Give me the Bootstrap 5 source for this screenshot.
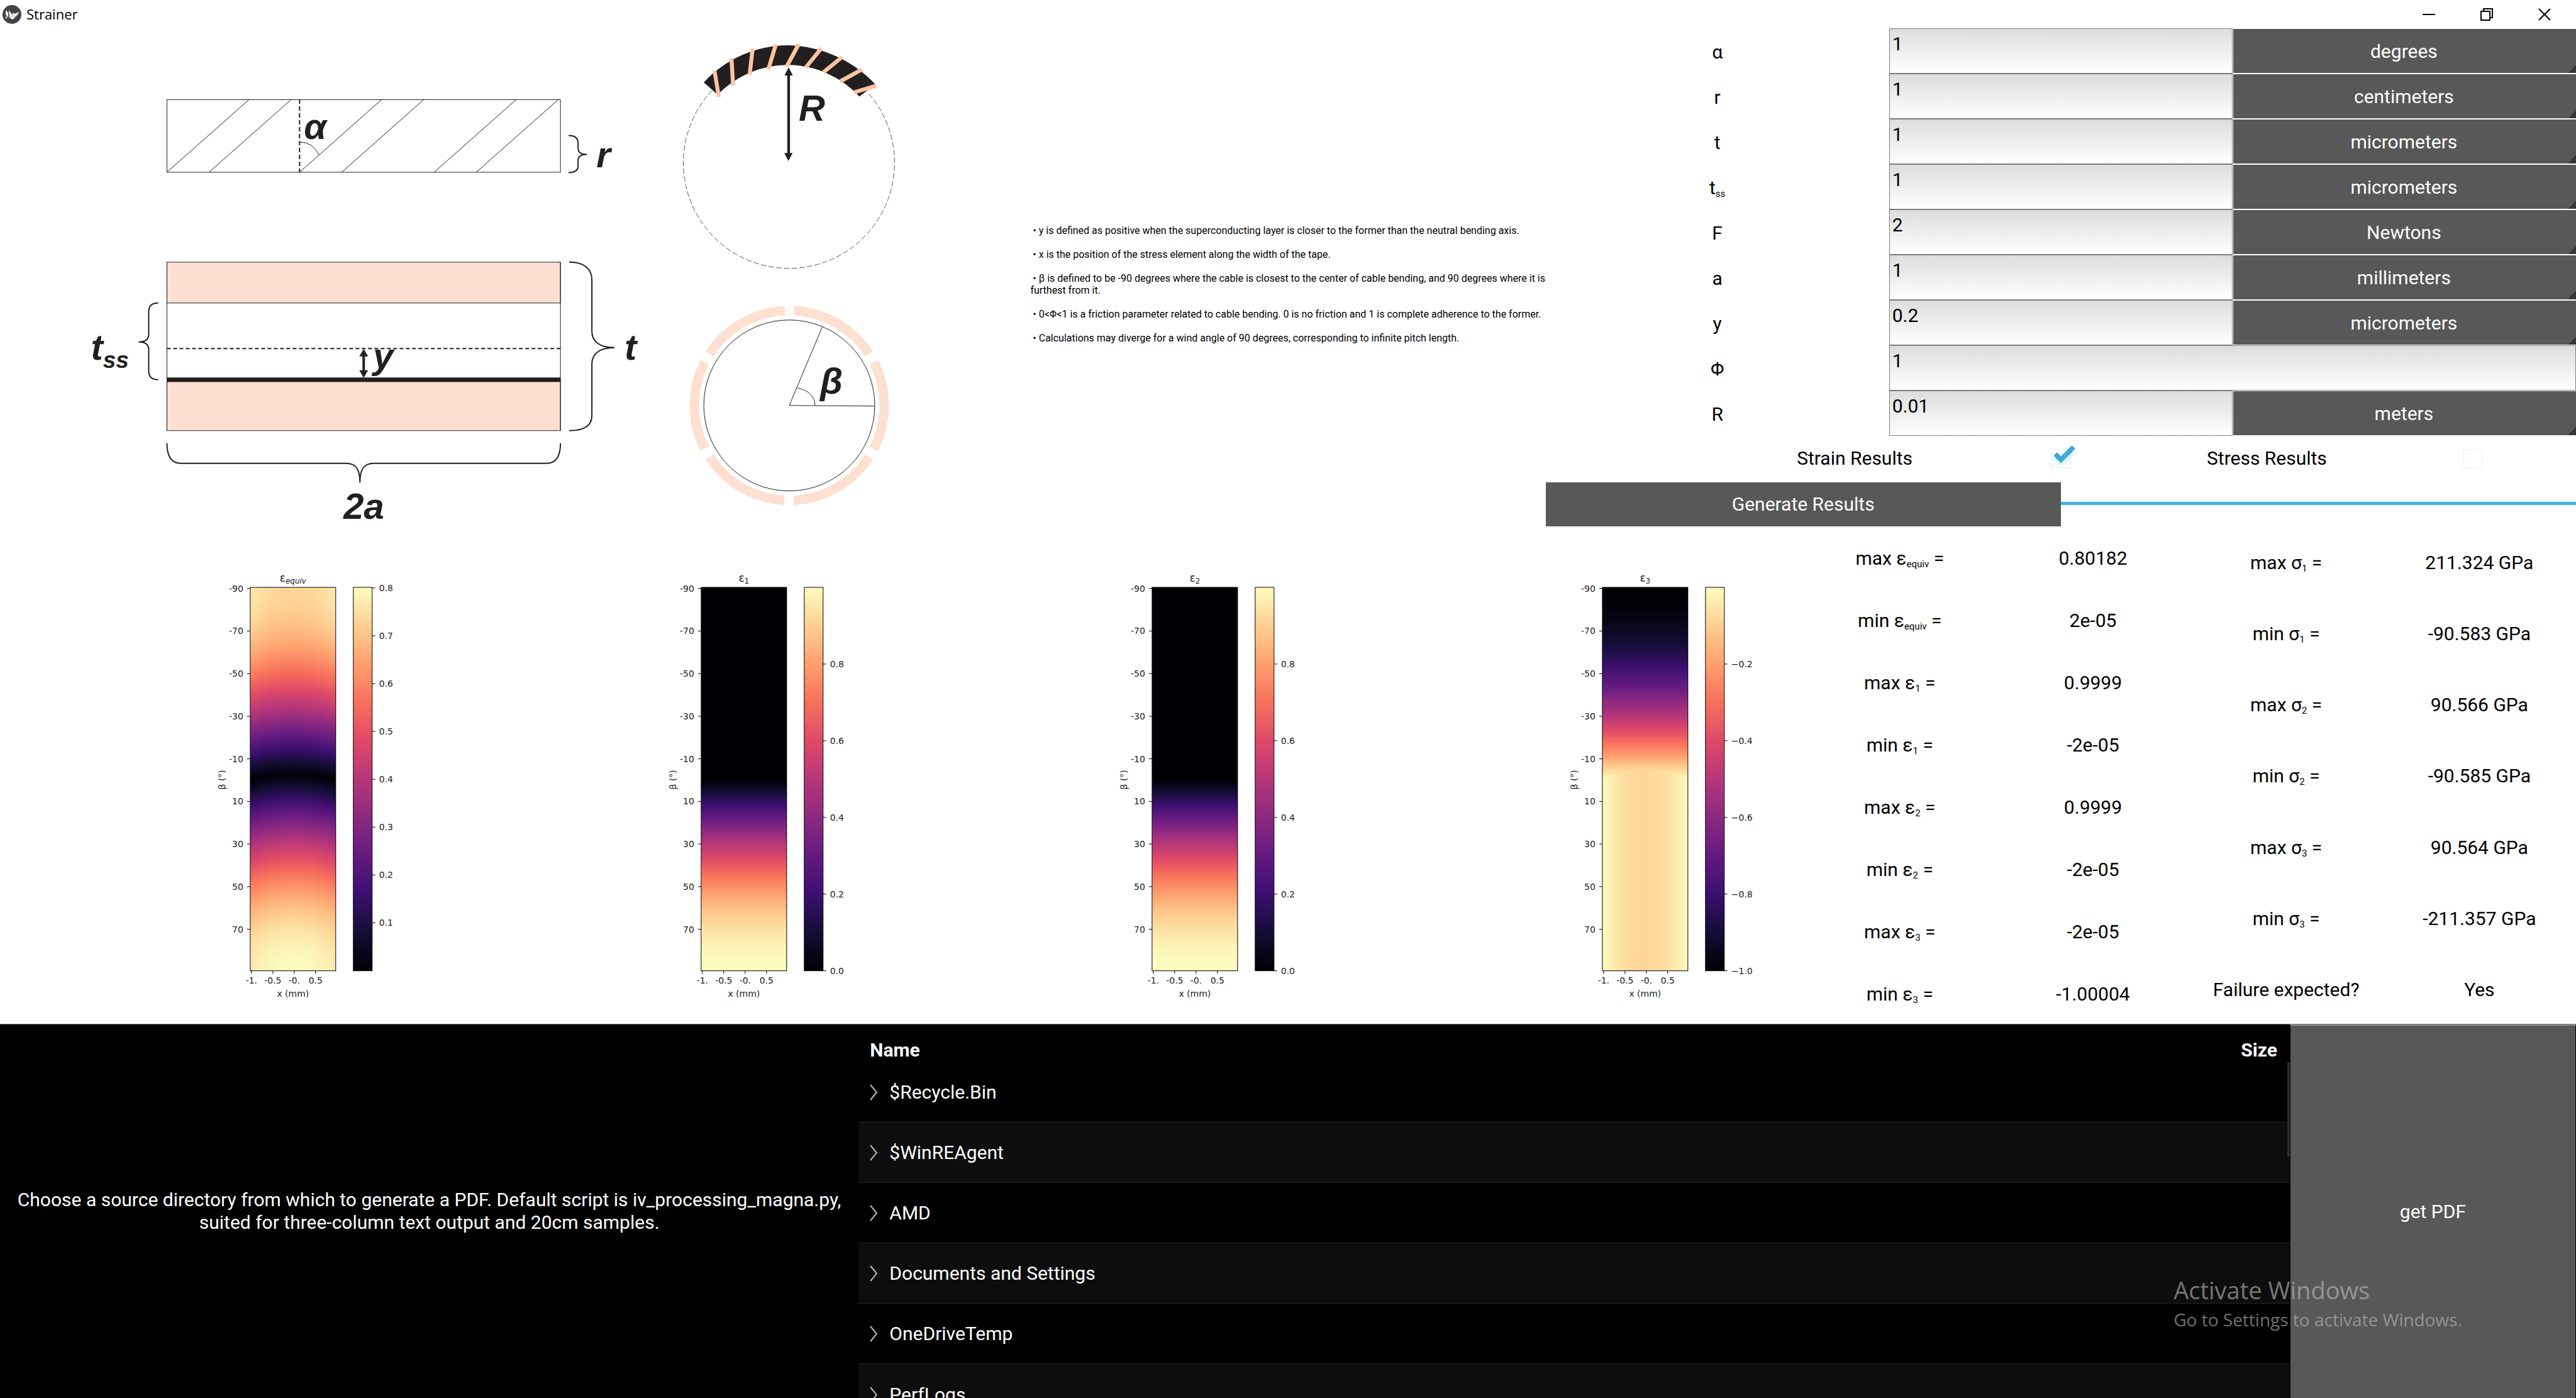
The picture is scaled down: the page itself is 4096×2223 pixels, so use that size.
<!DOCTYPE html>
<html lang="en">
<head>
<meta charset="utf-8">
<meta name="viewport" content="width=device-width, initial-scale=1">
<title>Strainer</title>
<link href="https://cdn.jsdelivr.net/npm/bootstrap@5.3.0/dist/css/bootstrap.min.css" rel="stylesheet">
<style>
  :root { --ink: #231f20; --btn: #585858; --sky: #3fb1dd; }
  body { font-family: Roboto, "Liberation Sans", sans-serif; font-size: 30px; line-height: 36px; color: #000; background: #fff; }
  .title-bar { height: 45px; font-family: "Open Sans", "Noto Sans", sans-serif; font-size: 22px; line-height: 28px; }
  .win-btn { width: 92px; height: 42px; background: none; border: 0; padding: 0 0 2px; }
  .band-4 { flex: 4 1 0; min-height: 0; }
  .band-3 { flex: 3 1 0; min-height: 0; }
  .w-40 { width: 40%; } .w-20 { width: 20%; } .w-70 { width: 70%; } .w-30 { width: 30%; }
  .third { flex: 1 1 0; min-width: 0; }
  .two-thirds { flex: 2 1 0; min-width: 0; }
  .three-ninths { flex: 3 1 0; min-width: 0; }
  .five-ninths { flex: 5 1 0; min-width: 0; }
  .one-ninth { flex: 1 1 0; min-width: 0; padding: 0; }
  .notes { font-size: 16px; line-height: 19px; padding-top: 22px; }
  .notes p { margin: 0 0 19px; white-space: pre-wrap; }
  .notes p:last-child { margin: 0; }
  .figure-svg { display: block; width: 100%; height: 100%; }
  .value-box { border: 1px solid #7d7d7d; border-radius: 0; padding: 6px 4px 28px; background: linear-gradient(#dddddd, #ffffff); color: #000; width: 100%; line-height: 36px; outline: 0; }
  .unit-box { appearance: none; -webkit-appearance: none; width: 100%; margin: 1px 0 1px 1px; padding: 2px 2px 0 0; border: 0; border-radius: 0; color: #fff; text-align: center; text-align-last: center; outline: 0;
    background: linear-gradient(135deg, transparent 50%, #363636 50%) right bottom / 12px 14px no-repeat var(--btn); }
  .flat-btn { background: var(--btn); color: #fff; border: 0; border-radius: 0; }
  .go-btn { margin-top: 2px; }
  .get-btn { border-top: 2px solid #8c8c8c; border-right: 1px solid #000; border-left: 1px solid #000; }
  .tick { appearance: none; -webkit-appearance: none; width: 64px; height: 64px; margin: 0;
    background: url("data:image/svg+xml,%3Csvg xmlns='http://www.w3.org/2000/svg' viewBox='0 0 64 64'%3E%3Crect x='17.500' y='17.500' width='29' height='29' fill='none' stroke='%23eeeeee'/%3E%3C/svg%3E") center no-repeat; }
  .tick:checked { background-image: url("data:image/svg+xml,%3Csvg xmlns='http://www.w3.org/2000/svg' viewBox='0 0 64 64'%3E%3Cfilter id='g' x='-50%25' y='-50%25' width='200%25' height='200%25'%3E%3CfeGaussianBlur stdDeviation='3'/%3E%3C/filter%3E%3Crect x='17.500' y='17.500' width='29' height='29' fill='none' stroke='%23e2eef3'/%3E%3Cpath d='M24 27l8 9 20-20' fill='none' stroke='%239fdcf5' stroke-width='10' filter='url(%23g)' opacity='.7'/%3E%3Cpath d='M23 25l9 9 20-20' fill='none' stroke='%234a8fae' stroke-width='7'/%3E%3Cpath d='M24 26l8 8 19-19' fill='none' stroke='%2334afe0' stroke-width='5'/%3E%3C/svg%3E"); }
  .run-bar { height: 5px; border-radius: 0; background: none; }
  .run-bar .progress-bar { background: var(--sky); }
  sub { font-size: 15px; bottom: -4px; }
  .pane-dark { background: #000; color: #fff; border-top: 1px solid #777; }
  .files th { height: 59px; padding: 23px 20px 0 18px; font-weight: 700; vertical-align: top; }
  .files td { height: 96px; padding: 2px 18px 0; vertical-align: middle; border-top: 1px solid #242424; }
  .files tbody tr:nth-child(even) td { background: #0d0d0d; }
  .files tbody tr:first-child td { border-top: 0; }
  .thumb { top: 60px; right: 0; width: 4px; height: 150px; background: #2e2e2e; }
  .chev { width: 12px; height: 26px; margin-right: 19px; }
  .watermark { right: 181px; bottom: 103px; font-family: "Open Sans", "Noto Sans", sans-serif; color: rgba(190, 190, 190, .62); font-size: 28px; line-height: 44px; pointer-events: none; }
  .watermark strong { font-weight: 400; font-size: 38px; line-height: 50px; display: block; }
  .dia text { font: italic bold 58px "Liberation Sans", sans-serif; fill: var(--ink); }
  .dia .ss { font-size: 37px; }
  .plot text { font: 14px "DejaVu Sans", sans-serif; fill: #222; }
  .plot .ttl { font-size: 17px; }
  .plot .low { font-size: 12px; }
  .plot .slant { font-style: oblique; }
</style>
</head>
<body class="vh-100 overflow-hidden d-flex flex-column">

<header class="title-bar d-flex align-items-start flex-shrink-0">
  <svg class="ms-1 mt-2" width="30" height="30" viewBox="0 0 30 30" aria-hidden="true">
    <circle cx="15" cy="15" r="15" fill="#414345"/>
    <path d="M5 8l4 4v8l-4-5zM10 8l6 8-5 5zM5 17l3 4H5zM12 21l5-6 3 5-4 3zM16 12l3 2 8-3-6 8-5-4z" fill="#f4f4f4"/>
  </svg>
  <span class="ps-2 pt-2">Strainer</span>
  <div class="ms-auto me-1 d-flex">
    <button class="win-btn" aria-label="Minimize"><svg width="20" height="20" viewBox="0 0 20 20"><path d="M0 10h20" stroke="#000" stroke-width="2"/></svg></button>
    <button class="win-btn" aria-label="Restore"><svg width="20" height="20" viewBox="0 0 20 20" fill="none" stroke="#000" stroke-width="2"><path d="M1 5h14v14H1zM5 5V1h14v14h-4"/></svg></button>
    <button class="win-btn" aria-label="Close"><svg width="20" height="20" viewBox="0 0 20 20"><path d="M1 1l18 18M19 1L1 19" stroke="#000" stroke-width="2"/></svg></button>
  </div>
</header>

<section class="band-4 d-flex">
  <div class="w-40">
    <svg class="figure-svg dia" viewBox="0 45 1638 792" fill="none" stroke="#231f20" stroke-width="1">
      <!-- tape wound at pitch angle -->
      <path d="M265 158.500H891V274H265zM265 274L396 158M332 274L463 158M476 274L607 158M543 274L674 158M690 274L821 158M757 274L888 158"/>
      <path d="M476 158V274" stroke-width="2" stroke-dasharray="7 4"/>
      <path d="M476 226q22 0 31 21"/>
      <path d="M904 215.500c10 0 15 4 15 12v8c0 6 4 10 14 10c-10 0-14 4-14 10v8c0 7-5 11-15 11" stroke-width="2"/>
      <!-- tape cross-section -->
      <path d="M265 417H891V482H265zM265 607H891V685H265z" fill="#fde0d2"/>
      <path d="M265 417V685M891 417V685"/>
      <path d="M265 604H891" stroke-width="7"/>
      <path d="M265 554.500H891" stroke-width="2" stroke-dasharray="6 4"/>
      <path d="M578 562V594" stroke-width="4"/>
      <path d="M578 555l7 12h-14zM578 601l7-12h-14z" fill="#231f20" stroke="none"/>
      <path d="M251 482c-10 0-15 5-15 14v36c0 8-5 12-16 12c11 0 16 4 16 12v34c0 9 5 14 15 14" stroke-width="2"/>
      <path d="M905 417c24 0 36 11 36 28v82c0 16 12 26 36 26c-24 0-36 10-36 26v82c0 16-12 24-36 24" stroke-width="2"/>
      <path d="M265 705c0 20 6 32 22 32H550c16 0 22 10 22 31c0-21 6-31 22-31H869c16 0 22-12 22-32" stroke-width="2"/>
      <!-- bent cable -->
      <g transform="translate(1070 60) scale(.3333)">
        <path d="M186 252A504 504 0 1 0 930 262" stroke-width="3" stroke="#555" stroke-dasharray="26 11"/>
        <path d="M147 213A552 552 0 0 1 550 36A590 590 0 0 1 965 222L890 281A465 465 0 0 0 550 130A465 465 0 0 0 213 272z" fill="#231f20" stroke="none"/>
        <path d="M198 157L219 283M279 98L287 228M380 53L366 176M491 32L455 151M600 31L542 139M708 50L633 143M807 92L718 165M903 151L797 209M970 229L863 261" stroke="#fac4a4" stroke-width="19"/>
        <path d="M552 160V570" stroke-width="13"/>
        <path d="M552 142l20 38h-40zM551 588l20-38h-40z" fill="#231f20" stroke="none"/>
      </g>
      <!-- cable cross-section -->
      <circle cx="1255" cy="645" r="136"/>
      <circle cx="1255" cy="645" r="151" stroke="#fde0d2" stroke-width="15" stroke-dasharray="143 15.130" transform="rotate(-87.100 1255 645)"/>
      <path d="M1391 646L1255 645L1308 519M1268 617q27 6 28 28"/>
      <g stroke="none">
        <text x="483" y="221">α</text><text x="948" y="266">r</text><text x="1270" y="192">R</text>
        <text x="593" y="586">y</text><text x="144" y="572">t<tspan class="ss" dy="13">ss</tspan></text>
        <text x="993" y="572">t</text><text x="546" y="825">2a</text><text x="1304" y="626">β</text>
      </g>
    </svg>
  </div>

  <div class="w-20 notes d-flex flex-column justify-content-center">
    <p> • y is defined as positive when the superconducting layer is closer to the former than the neutral bending axis.</p>
    <p> • x is the position of the stress element along the width of the tape.</p>
    <p> • β is defined to be -90 degrees where the cable is closest to the center of cable bending, and 90 degrees where it is furthest from it.</p>
    <p> • 0&lt;Φ&lt;1 is a friction parameter related to cable bending. 0 is no friction and 1 is complete adherence to the former.</p>
    <p> • Calculations may diverge for a wind angle of 90 degrees, corresponding to infinite pitch length.</p>
  </div>

  <form class="w-40 d-flex flex-column" id="params">
    <div class="third d-flex align-items-center text-center">
      <span class="w-20"></span>
      <label class="w-20" for="strain">Strain Results</label>
      <span class="w-20 d-flex justify-content-center"><input class="tick" type="checkbox" id="strain" checked></span>
      <label class="w-20" for="stress">Stress Results</label>
      <span class="w-20 d-flex justify-content-center"><input class="tick" type="checkbox" id="stress"></span>
    </div>
    <div class="third d-flex">
      <button type="button" class="flat-btn go-btn w-50">Generate Results</button>
      <div class="w-50 align-self-center"><div class="progress run-bar" role="progressbar" aria-label="Progress" aria-valuenow="100" aria-valuemin="0" aria-valuemax="100"><div class="progress-bar w-100"></div></div></div>
    </div>
  </form>
</section>

<section class="band-4 d-flex">
  <div class="w-70 d-flex" id="plots"></div>
  <div class="w-30 d-flex text-center">
    <div class="w-50 d-flex flex-column" id="strains"></div>
    <div class="w-50 d-flex flex-column" id="stresses"></div>
  </div>
</section>

<section class="band-3 d-flex pane-dark">
  <div class="three-ninths d-flex align-items-center justify-content-center text-center">
    <p class="m-0 px-3">Choose a source directory from which to generate a PDF. Default script is iv_processing_magna.py, suited for three-column text output and 20cm samples.</p>
  </div>
  <div class="five-ninths position-relative overflow-hidden">
    <table class="files w-100">
      <thead><tr><th>Name</th><th class="text-end">Size</th></tr></thead>
      <tbody id="files"></tbody>
    </table>
    <div class="thumb position-absolute"></div>
  </div>
  <div class="one-ninth d-flex"><button type="button" class="flat-btn get-btn w-100">get PDF</button></div>
</section>

<div class="watermark position-absolute"><strong>Activate Windows</strong>Go to Settings to activate Windows.</div>

<script src="https://cdn.jsdelivr.net/npm/bootstrap@5.3.0/dist/js/bootstrap.bundle.min.js"></script>
<script>
  // Parameter rows
  const params = [['α','1','degrees'],['r','1','centimeters'],['t','1','micrometers'],['t<sub>ss</sub>','1','micrometers'],
    ['F','2','Newtons'],['a','1','millimeters'],['y','0.2','micrometers'],['Φ','1',null],['R','0.01','meters']];
  document.getElementById('params').insertAdjacentHTML('afterbegin', params.map(([n, v, u], i) =>
    `<div class="third d-flex"><label class="third align-self-center text-center pt-1" for="p${i}">${n}</label>
     <div class="${u ? 'third' : 'two-thirds'} d-flex"><input class="value-box" id="p${i}" value="${v}"></div>
     ${u ? `<div class="third d-flex"><select class="unit-box" aria-label="Unit ${i + 1}"><option>${u}</option></select></div>` : ''}</div>`).join(''));

  // Result tables
  const fill = (id, rows) => document.getElementById(id).innerHTML = rows.map(([a, b]) =>
    `<div class="third d-flex align-items-center pt-1"><span class="w-50">${a}</span><span class="w-50">${b}</span></div>`).join('');
  const eps = (m, s) => `${m} ε<sub>${s}</sub> =`, sig = (m, s) => `${m} σ<sub>${s}</sub> =`;
  fill('strains', [[eps('max','equiv'),'0.80182'],[eps('min','equiv'),'2e-05'],[eps('max',1),'0.9999'],[eps('min',1),'-2e-05'],
    [eps('max',2),'0.9999'],[eps('min',2),'-2e-05'],[eps('max',3),'-2e-05'],[eps('min',3),'-1.00004']]);
  fill('stresses', [[sig('max',1),'211.324 GPa'],[sig('min',1),'-90.583 GPa'],[sig('max',2),'90.566 GPa'],[sig('min',2),'-90.585 GPa'],
    [sig('max',3),'90.564 GPa'],[sig('min',3),'-211.357 GPa'],['Failure expected?','Yes']]);

  // Directory listing
  document.getElementById('files').innerHTML = ['$Recycle.Bin','$WinREAgent','AMD','Documents and Settings','OneDriveTemp','PerfLogs'].map(f =>
    `<tr><td colspan="2"><div class="d-flex align-items-center"><svg class="chev" viewBox="0 0 12 26"><path d="M1 1l10 12L1 25" fill="none" stroke="#bbb" stroke-width="2"/></svg>${f}</div></td></tr>`).join('');

  // Magma colour map
  const magma = [[0,0,4],[20,14,54],[59,15,112],[100,26,128],[140,41,129],[183,55,121],[222,73,104],[247,112,92],[254,159,109],[254,207,146],[252,253,191]];
  const colour = v => {
    v = Math.max(0, Math.min(1, v)) * 10;
    const i = Math.min(9, Math.floor(v)), f = v - i;
    return `rgb(${magma[i].map((c, k) => Math.round(c + (magma[i + 1][k] - c) * f))})`;
  };

  // Heat maps: strain over tape width x and angle b around the cable
  const L = 398, T = 97, W = 136, H = 610, CB = 562, CW = 30;
  const tension = (x, s) => Math.max(s, 0);
  const maps = [
    { sub: 'equiv', slant: true, cols: 34, f: (x, s) => Math.hypot(.955 * s + .045 * (1 - x * x), .025 * (1 - x * x)),
      ticks: [.8,.7,.6,.5,.4,.3,.2,.1].map(v => [v.toFixed(1), 1 + (.8 - v) * 761]) },
    { sub: '1', cols: 1, f: tension, ticks: [.8,.6,.4,.2,0].map(v => [v.toFixed(1), H - v * H]) },
    { sub: '2', cols: 1, f: tension, ticks: [.8,.6,.4,.2,0].map(v => [v.toFixed(1), H - v * H]) },
    { sub: '3', cols: 34, f: (x, s) => Math.min(1 + Math.min(s, 0), 1 - .085 * (1 - x * x)),
      ticks: [.2,.4,.6,.8,1].map(v => ['−' + v.toFixed(1), v * H]) }
  ];
  document.getElementById('plots').innerHTML = maps.map((m, n) => {
    let cells = '';
    for (let r = 0; r < 180; r++) {
      const s = Math.sin((r - 90) * Math.PI / 180);
      for (let c = 0; c < m.cols; c++) {
        const x = m.cols > 1 ? (c + .5) / m.cols * 2 - 1 : 0;
        cells += `<rect x="${L + c * W / m.cols}" y="${T + r * H / 180}" width="${W / m.cols}" height="${H / 180 + .1}" fill="${colour(m.f(x, s))}"/>`;
      }
    }
    const stops = magma.map((c, i) => `<stop offset="${i * 10}%" stop-color="rgb(${c})"/>`).join('');
    const yt = [-90,-70,-50,-30,-10,10,30,50,70].map(b => { const y = T + (b + 90.5) * H / 180;
      return `<path d="M${L - 5} ${y}h5" stroke="#000"/><text x="${L - 11}" y="${y + 5}" text-anchor="end">${b}</text>`; }).join('');
    const xt = ['-1.','-0.5','-0.','0.5'].map((t, i) => { const x = L + 2 + i * 34;
      return `<path d="M${x} ${T + H}v5" stroke="#000"/><text x="${x}" y="${T + H + 20}" text-anchor="middle">${t}</text>`; }).join('');
    const ct = m.ticks.map(([t, y]) => `<path d="M${CB + CW} ${T + y}h5" stroke="#000"/><text x="${CB + CW + 11}" y="${T + y + 5}">${t}</text>`).join('');
    return `<div class="third"><svg class="figure-svg plot" viewBox="0 0 717 792">
      <defs><linearGradient id="g${n}" x1="0" y1="1" x2="0" y2="0">${stops}</linearGradient></defs>
      <g shape-rendering="crispEdges">${cells}</g>
      <rect x="${CB}" y="${T}" width="${CW}" height="${H}" fill="url(#g${n})"/>
      <g fill="none" stroke="#000"><rect x="${L}" y="${T}" width="${W}" height="${H}"/><rect x="${CB}" y="${T}" width="${CW}" height="${H}"/></g>
      ${yt}${xt}${ct}
      <text class="ttl" x="${L + W / 2}" y="${T - 9}" text-anchor="middle">ε<tspan class="low${m.slant ? ' slant' : ''}" dy="3">${m.sub}</tspan></text>
      <text x="${L + W / 2}" y="${T + H + 41}" text-anchor="middle">x (mm)</text>
      <text transform="translate(358 ${T + H / 2 + 1}) rotate(-90)" text-anchor="middle">β (°)</text>
    </svg></div>`;
  }).join('');
</script>
</body>
</html>
